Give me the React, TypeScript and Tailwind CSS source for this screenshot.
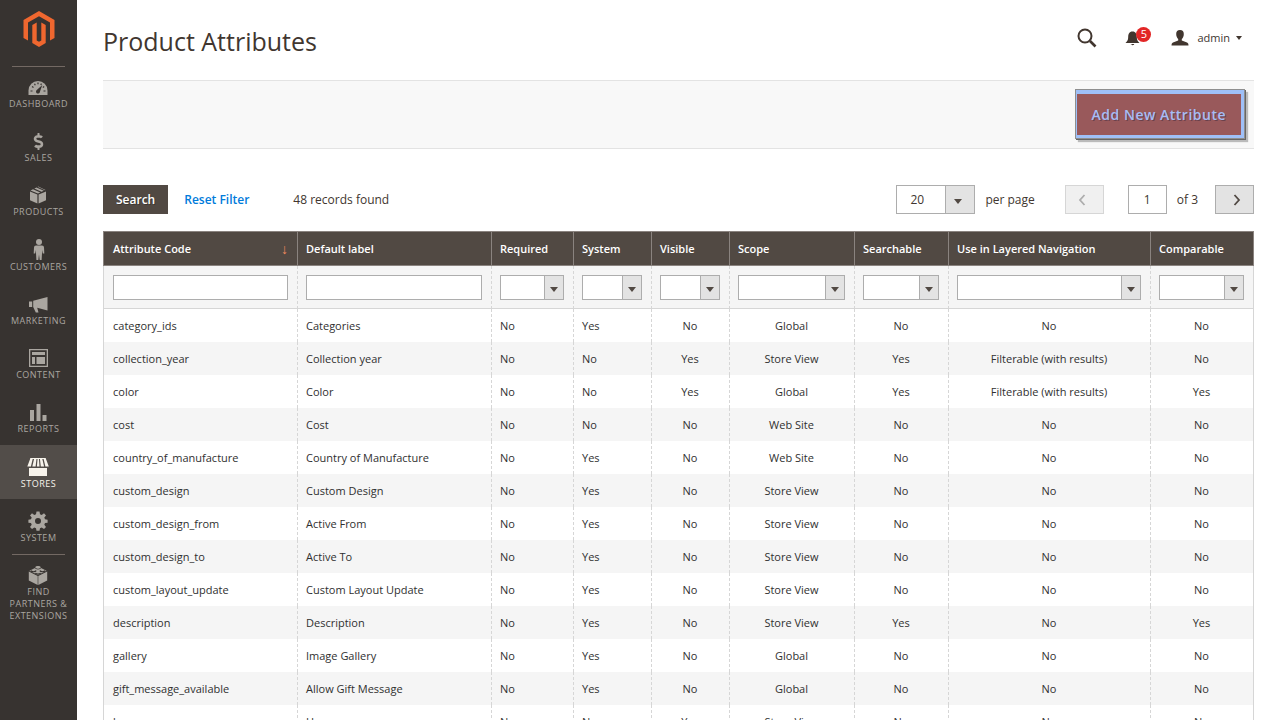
import React from 'react';
import { FaDollarSign } from 'react-icons/fa';

interface NavItem {
  label: string;
  icon: React.ReactNode;
  active?: boolean;
}

interface Column {
  key: keyof Attribute;
  label: string;
  width: string;
  filter: 'text' | 'select';
  center?: boolean;
  sorted?: boolean;
}

interface Attribute {
  code: string;
  label: string;
  required: string;
  system: string;
  visible: string;
  scope: string;
  searchable: string;
  layered: string;
  comparable: string;
}

const MagentoLogo = () => (
  <svg width="32" height="36" viewBox="0 0 32 36" fill="#ef672f" aria-hidden="true">
    <path d="M16 0 31.500 9V27L27 29.500V11.500L16 5.200 5 11.500V29.500L.5 27V9z" />
    <path d="M9.300 14 13.700 11.500V29.500L16 30.800l2.300-1.300V11.500L22.700 14V32L16 36 9.300 32z" />
  </svg>
);

const DashboardIcon = () => (
  <svg width="20" height="20" viewBox="0 0 20 20" fill="currentColor" aria-hidden="true">
    <path d="M.5 18v-4.500a9.500 9.500 0 0 1 19 0V18z" />
    <path d="M2.500 14h2M15.500 14h2M4 9.500l1.500 1M6.500 6.700l.8 1.500M10 5.500v1.800M13.500 6.700l-.8 1.200M16.200 9.500l-1.400 1" stroke="#373330" strokeWidth="1.200" fill="none" />
    <path d="M14.300 8 12 14.600a2 2 0 1 1-3.200-1.600z" fill="#373330" />
  </svg>
);

const ProductsIcon = () => (
  <svg width="20" height="20" viewBox="0 0 20 20" fill="currentColor" aria-hidden="true">
    <path d="M2 6.500 9.400 9.600v9L2 15.300zM18 6.500 10.600 9.600v9l7.400-3.300z" />
    <path d="M2.500 5.400 5 4.200l7.300 3.200L10 8.600zM6.300 3.500 8.500 2.400l7.300 3.300-2.300 1.100z" />
    <path d="M9.600 1.800 10.200 1.500l7.300 3.500-.6.200z" />
  </svg>
);

const CustomersIcon = () => (
  <svg width="20" height="22" viewBox="0 0 20 22" fill="currentColor" aria-hidden="true">
    <circle cx="11" cy="3" r="3" />
    <path d="M8 6.500h6a2 2 0 0 1 2 2l.3 6h-1.500l-.6-3.500L13.600 21h-1.900L11 15.500 10.300 21H8.400L7.800 11l-.6 3.500H5.700l.3-6a2 2 0 0 1 2-2z" />
  </svg>
);

const MarketingIcon = () => (
  <svg width="20" height="20" viewBox="0 0 20 20" fill="currentColor" aria-hidden="true">
    <path d="M1 7.500h3.200V13H1zM5.200 6.800 19.500 3v13.500L9.200 13.700l1.300 4.800H7.800L5.200 13z" />
  </svg>
);

const ContentIcon = () => (
  <svg width="20" height="20" viewBox="0 0 20 20" fill="currentColor" aria-hidden="true">
    <path d="M1 1h19v18H1zM2.300 2.300v15.400h16.400V2.300z" fillRule="evenodd" />
    <path d="M4 4h13v3H4zM4 9h3v7H4zM8.500 9H17v7H8.500z" />
  </svg>
);

const ReportsIcon = () => (
  <svg width="20" height="20" viewBox="0 0 20 20" fill="currentColor" aria-hidden="true">
    <path d="M2 8h4v11H2zM8.500 2h4v17h-4zM14.500 13h4v6h-4z" />
  </svg>
);

// Awning stripes flare out towards the bottom
const StoresIcon = () => (
  <svg width="22" height="20" viewBox="0 0 22 20" fill="currentColor" aria-hidden="true">
    <path d="M2 11h18v8H2z" />
    <path d="M3.300 1.500h2.500L3.900 9.500H.3zM7.200 1.500h2.300L8.600 9.500H5.300zM10.600 1.500h1.300l.6 8H9.900zM12.900 1.500h2.300l1.900 8h-3.300zM16.500 1.500h2.300l3 8h-3.400z" />
    <path d="M3.300 1h15.400v1H3.300z" />
  </svg>
);

const SystemIcon = () => (
  <svg width="20" height="20" viewBox="0 0 20 20" fill="currentColor" aria-hidden="true">
    <path
      fillRule="evenodd"
      d="M8.500.5h3l.5 2.700 1.700.7L16 2.300 18 4.400l-1.700 2.200.7 1.700 2.600.4v3l-2.600.4-.7 1.700 1.700 2.200-2 2.100-2.300-1.600-1.700.7-.5 2.600h-3L8 17.200l-1.700-.7L4 18.100 2 16l1.700-2.200-.7-1.700-2.600-.4v-3L3 8.300l.7-1.700L2 4.400l2-2.100 2.300 1.600L8 3.200zM10 7a3 3 0 1 0 0 6 3 3 0 0 0 0-6z"
    />
  </svg>
);

const PartnersIcon = () => (
  <svg width="20" height="20" viewBox="0 0 20 20" fill="currentColor" aria-hidden="true">
    <path d="M.8 6.500 9.700 11v9L.8 15.500zM19.200 6.500 10.300 11v9l8.900-4.500z" />
    <path d="M1.500 5.700 10 1.500l8.500 4.200L10 10z" />
    <path d="M7.300 2.800c.8 1.500 4.600 1.500 5.400 0M2.800 5.600c.8 1.500 4.600 1.500 5.400 0M11.800 5.600c.8 1.500 4.600 1.500 5.400 0M7.300 8c.8 1.500 4.600 1.500 5.400 0" stroke="#373330" strokeWidth="1.200" fill="none" />
    <ellipse cx="10" cy="2.300" rx="2.700" ry="1.400" />
  </svg>
);

const NAV_ITEMS: NavItem[] = [
  { label: 'Dashboard', icon: <DashboardIcon /> },
  { label: 'Sales', icon: <FaDollarSign size={17} aria-hidden="true" /> },
  { label: 'Products', icon: <ProductsIcon /> },
  { label: 'Customers', icon: <CustomersIcon /> },
  { label: 'Marketing', icon: <MarketingIcon /> },
  { label: 'Content', icon: <ContentIcon /> },
  { label: 'Reports', icon: <ReportsIcon /> },
  { label: 'Stores', icon: <StoresIcon />, active: true },
  { label: 'System', icon: <SystemIcon /> },
];

const COLUMNS: Column[] = [
  { key: 'code', label: 'Attribute Code', width: 'w-[194px]', filter: 'text', sorted: true },
  { key: 'label', label: 'Default label', width: 'w-[194px]', filter: 'text' },
  { key: 'required', label: 'Required', width: 'w-[82px]', filter: 'select' },
  { key: 'system', label: 'System', width: 'w-[78px]', filter: 'select' },
  { key: 'visible', label: 'Visible', width: 'w-[78px]', filter: 'select', center: true },
  { key: 'scope', label: 'Scope', width: 'w-[125px]', filter: 'select', center: true },
  { key: 'searchable', label: 'Searchable', width: 'w-[94px]', filter: 'select', center: true },
  { key: 'layered', label: 'Use in Layered Navigation', width: 'w-[202px]', filter: 'select', center: true },
  { key: 'comparable', label: 'Comparable', width: 'w-[104px]', filter: 'select', center: true },
];

const row = (
  code: string, label: string, required: string, system: string, visible: string,
  scope: string, searchable: string, layered: string, comparable: string,
): Attribute => ({ code, label, required, system, visible, scope, searchable, layered, comparable });

const ATTRIBUTES: Attribute[] = [
  row('category_ids', 'Categories', 'No', 'Yes', 'No', 'Global', 'No', 'No', 'No'),
  row('collection_year', 'Collection year', 'No', 'No', 'Yes', 'Store View', 'Yes', 'Filterable (with results)', 'No'),
  row('color', 'Color', 'No', 'No', 'Yes', 'Global', 'Yes', 'Filterable (with results)', 'Yes'),
  row('cost', 'Cost', 'No', 'No', 'No', 'Web Site', 'No', 'No', 'No'),
  row('country_of_manufacture', 'Country of Manufacture', 'No', 'Yes', 'No', 'Web Site', 'No', 'No', 'No'),
  row('custom_design', 'Custom Design', 'No', 'Yes', 'No', 'Store View', 'No', 'No', 'No'),
  row('custom_design_from', 'Active From', 'No', 'Yes', 'No', 'Store View', 'No', 'No', 'No'),
  row('custom_design_to', 'Active To', 'No', 'Yes', 'No', 'Store View', 'No', 'No', 'No'),
  row('custom_layout_update', 'Custom Layout Update', 'No', 'Yes', 'No', 'Store View', 'No', 'No', 'No'),
  row('description', 'Description', 'No', 'Yes', 'No', 'Store View', 'Yes', 'No', 'Yes'),
  row('gallery', 'Image Gallery', 'No', 'Yes', 'No', 'Global', 'No', 'No', 'No'),
  row('gift_message_available', 'Allow Gift Message', 'No', 'Yes', 'No', 'Global', 'No', 'No', 'No'),
  row('house', 'House', 'No', 'No', 'Yes', 'Store View', 'No', 'No', 'No'),
];

const SelectArrow = () => (
  <svg width="8" height="5" viewBox="0 0 8 5" fill="#514943" aria-hidden="true">
    <path d="M0 0h8L4 5z" />
  </svg>
);

const FilterSelect: React.FC<{ label: string }> = ({ label }) => (
  <div className="relative">
    <select aria-label={label} className="block w-full h-[25px] appearance-none border border-[#adadad] bg-white outline-none">
      <option></option>
      <option>Yes</option>
      <option>No</option>
    </select>
    <span className="pointer-events-none absolute inset-y-0 right-0 w-5 flex items-center justify-center border border-[#adadad] bg-[#e3e3e3] pt-1">
      <SelectArrow />
    </span>
  </div>
);

const Sidebar = () => (
  <nav className="w-[77px] shrink-0 bg-[#373330] text-[#aaa6a0]">
    <a href="#" aria-label="Magento Admin" className="flex justify-center pt-[11px] pb-[19px]">
      <MagentoLogo />
    </a>
    <div className="mx-3 border-t border-[#736963]" />
    <ul className="-mt-0.5">
      {NAV_ITEMS.map((item) => (
        <li key={item.label} className="h-[54px] nth-[4n+3]:h-[55px]">
          <a
            href="#"
            className={`flex flex-col items-center h-full pt-[11px] text-[9px] leading-3 uppercase tracking-[0.5px] ${item.active ? 'bg-[#524d49] text-[#f7f3eb]' : ''}`}
          >
            <span className="flex h-[22px] items-center pr-px">{item.icon}</span>
            {item.label}
          </a>
        </li>
      ))}
    </ul>
    <div className="mx-3 mt-px border-t border-[#736963]" />
    <a href="#" className="flex flex-col items-center pt-[9px] text-center text-[9px] leading-3 uppercase tracking-[0.5px]">
      <span className="flex h-[22px] items-center pr-px"><PartnersIcon /></span>
      <span>Find<br />Partners &amp;<br />Extensions</span>
    </a>
  </nav>
);

const Header = () => (
  <header className="flex h-20 items-center justify-between">
    <h1 className="text-[25px] leading-9 text-[#41362f] pt-0.5">Product Attributes</h1>
    <div className="flex items-center pr-3 pb-1 text-[#41362f]">
      <button type="button" aria-label="Search" className="mr-7">
        <svg width="20" height="20" viewBox="0 0 20 20" fill="none" stroke="currentColor" aria-hidden="true">
          <circle cx="8" cy="8" r="6.500" strokeWidth="2" />
          <path d="m13 13 5.500 5.500" strokeWidth="2.600" />
        </svg>
      </button>
      <button type="button" aria-label="Notifications" className="relative mr-5 h-5 w-[26px]">
        <svg width="16" height="18" viewBox="0 0 16 18" fill="currentColor" aria-hidden="true">
          <path d="M7.500 2.500c3.300 0 4.300 2.500 4.300 5.500 0 3 1 4.500 2.700 6H.5c1.700-1.500 2.700-3 2.700-6 0-3 1-5.500 4.300-5.500zM5.800 15h3.400c0 1.600-3.400 1.600-3.400 0z" />
        </svg>
        <span className="absolute -top-px right-0 flex size-[15px] items-center justify-center rounded-full bg-[#e22626] text-[11px] font-medium text-white">5</span>
      </button>
      <button type="button" className="flex items-center text-[11px]">
        <svg width="18" height="18" viewBox="0 0 18 18" fill="currentColor" aria-hidden="true">
          <path d="M9 1c2.600 0 3.800 1.600 3.800 4 0 2.500-1 4-2 5v1.500L16 13.600c1 .5 1.500 1.400 1.500 2.900H.5c0-1.500.5-2.400 1.500-2.900l5.200-2.100V10c-1-1-2-2.500-2-5 0-2.400 1.200-4 3.800-4z" />
        </svg>
        <span className="ml-2 mr-[6px]">admin</span>
        <svg width="6" height="4" viewBox="0 0 6 4" fill="currentColor" aria-hidden="true">
          <path d="M0 0h6L3 4z" />
        </svg>
      </button>
    </div>
  </header>
);

const Toolbar = () => (
  <div className="flex h-[29px] items-center justify-between text-[12px] text-[#41362f]">
    <div className="flex items-center">
      <button type="button" className="h-[29px] bg-[#514943] px-[13px] font-semibold text-white [text-shadow:1px_1px_0_rgba(0,0,0,0.25)]">Search</button>
      <button type="button" className="ml-4 font-semibold text-[#007bdb]">Reset Filter</button>
      <span className="ml-11">48 records found</span>
    </div>
    <div className="flex items-center">
      <div className="relative">
        <select id="per-page" defaultValue="20" className="block h-[29px] w-[79px] appearance-none border border-[#adadad] bg-white pl-[13px] outline-none">
          <option>20</option>
          <option>30</option>
          <option>50</option>
        </select>
        <span className="pointer-events-none absolute inset-y-0 right-0 flex w-[30px] items-center justify-center border border-[#adadad] bg-[#e3e3e3] pt-1 pr-1">
          <SelectArrow />
        </span>
      </div>
      <label htmlFor="per-page" className="ml-[10px]">per page</label>
      <button type="button" disabled aria-label="Previous page" className="ml-[30px] flex h-[29px] w-[39px] items-center justify-center border border-[#d6d6d6] bg-[#f0f0f0] pr-1 text-[#adadad]">
        <svg width="8" height="12" viewBox="0 0 8 12" fill="none" stroke="currentColor" strokeWidth="1.800" aria-hidden="true">
          <path d="M6.500 1 2 6l4.500 5" />
        </svg>
      </button>
      <input id="page" type="text" defaultValue="1" className="ml-6 h-[29px] w-[39px] border border-[#adadad] text-center outline-none" />
      <label htmlFor="page" className="ml-[10px]">of 3</label>
      <button type="button" aria-label="Next page" className="ml-[17px] flex h-[29px] w-[39px] items-center justify-center border border-[#adadad] bg-[#e3e3e3] pl-1 text-[#514943]">
        <svg width="8" height="12" viewBox="0 0 8 12" fill="none" stroke="currentColor" strokeWidth="1.800" aria-hidden="true">
          <path d="m1.500 1 4.500 5-4.500 5" />
        </svg>
      </button>
    </div>
  </div>
);

const AttributeTable = () => (
  <table className="w-full table-fixed border-separate border-spacing-0 text-[11px] leading-4 text-[#303030]">
    <thead>
      <tr className="h-[35px] bg-[#514943] text-white">
        {COLUMNS.map((col) => (
          <th
            key={col.key}
            className={`${col.width} border-y border-l border-[#8a837f] last:border-r pl-2 first:pl-[9px] pr-[9px] text-left font-semibold whitespace-nowrap`}
          >
            <div className="flex justify-between">
              {col.label}
              {col.sorted && <span className="text-[14px] font-semibold text-[#f38a5e]">↓</span>}
            </div>
          </th>
        ))}
      </tr>
      <tr className="h-[43px] bg-[#f5f5f5]">
        {COLUMNS.map((col) => (
          <td key={col.key} className="border-b border-l border-dashed border-[#d6d6d6] [border-bottom-style:solid] first:[border-left-style:solid] last:border-r last:[border-right-style:solid] pl-2 first:pl-[9px] pr-[9px]">
            {col.filter === 'text' ? (
              <input type="text" aria-label={col.label} className="block w-full h-[25px] border border-[#adadad] bg-white px-1 outline-none" />
            ) : (
              <FilterSelect label={col.label} />
            )}
          </td>
        ))}
      </tr>
    </thead>
    <tbody>
      {ATTRIBUTES.map((attr) => (
        <tr key={attr.code} className="h-[33px] even:bg-[#f5f5f5]">
          {COLUMNS.map((col) => (
            <td
              key={col.key}
              className={`border-l border-dashed border-[#d6d6d6] first:[border-left-style:solid] last:border-r last:[border-right-style:solid] pl-2 first:pl-[9px] pr-[9px] ${col.center ? 'text-center' : ''}`}
            >
              {attr[col.key]}
            </td>
          ))}
        </tr>
      ))}
    </tbody>
  </table>
);

export default function App() {
  return (
    <div className="flex h-screen overflow-hidden bg-white font-['Open_Sans',sans-serif]">
      <Sidebar />
      <main className="min-w-0 flex-1 px-[26px]">
        <Header />
        <div className="flex h-[69px] items-start justify-end border-y border-[#e3e3e3] bg-[#f8f8f8] pt-2 pr-[9px]">
          <button
            type="button"
            className="h-[50px] border border-[#8f8f8f] bg-[#9fc0f8] pt-1 pr-[3px] pb-[3px] pl-px shadow-[1px_1px_0_#666,3px_3px_1px_#bbb]"
          >
            <span className="flex h-full items-center bg-[#99595b] px-[15px] text-[14px] font-semibold tracking-[0.5px] text-[#a6bdf5] [text-shadow:1px_1px_0_rgba(60,40,60,0.5)]">
              Add New Attribute
            </span>
          </button>
        </div>
        <div className="pt-9 pb-[17px]">
          <Toolbar />
        </div>
        <AttributeTable />
      </main>
    </div>
  );
}
